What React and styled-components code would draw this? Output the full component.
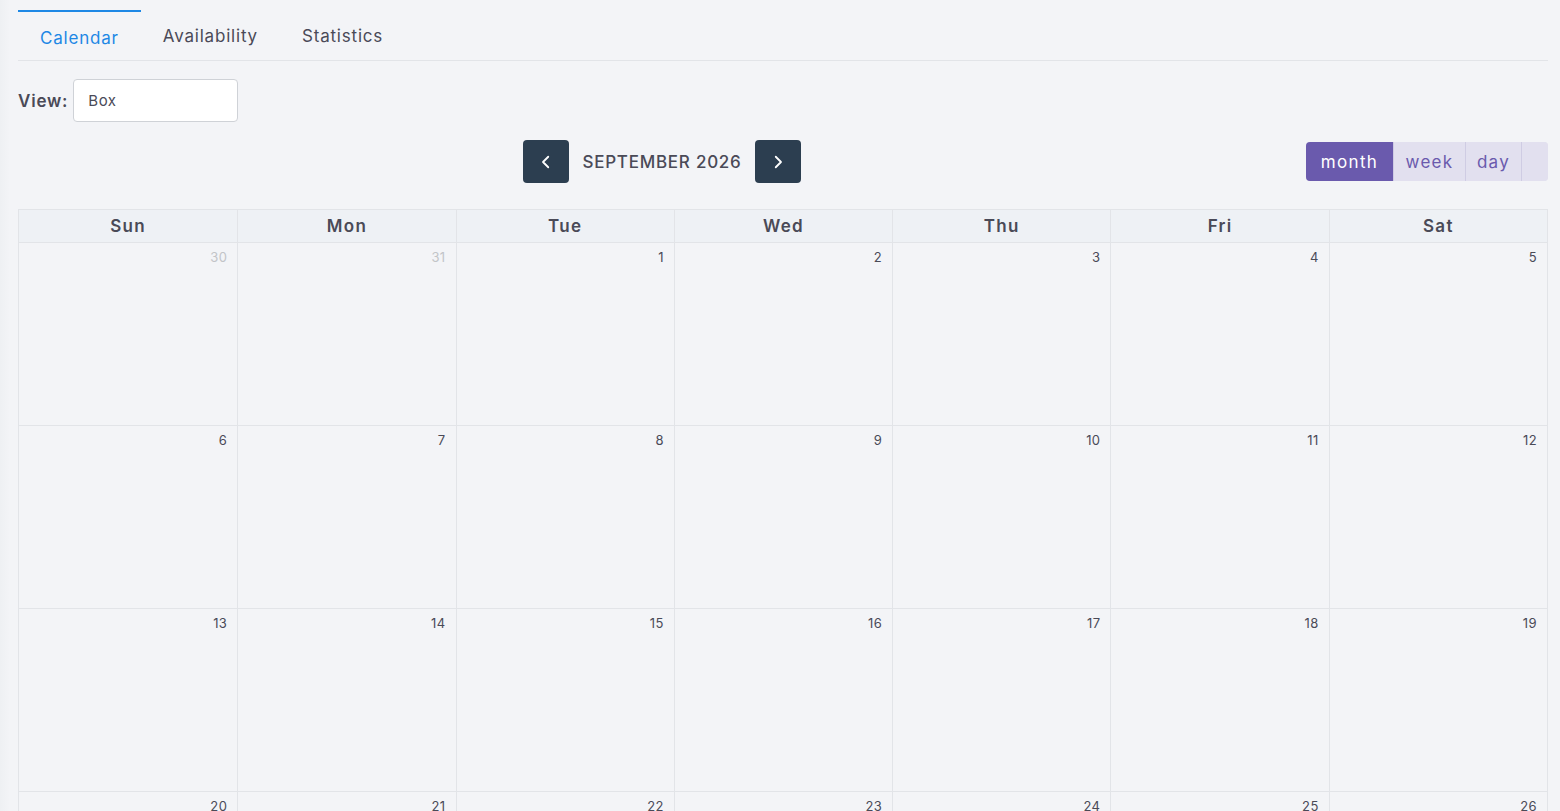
import React from 'react';
import styled, { createGlobalStyle } from 'styled-components';

const GlobalStyle = createGlobalStyle`
	html, body {
		margin: 0;
		padding: 0;
		background: #f3f4f7;
		font-family: Inter, "Noto Sans", sans-serif;
		color: #4a4a57;
	}
	* { box-sizing: border-box; }
`;

const Page = styled.div`
	padding: 10px 12px 0 18px;
	height: 811px;
	overflow: hidden;
	background: linear-gradient(to right, #eef0f3 0, #f3f4f7 10px);
`;

const Tabs = styled.div`
	display: flex;
	border-bottom: 1px solid #e2e4e8;
`;

const Tab = styled.div`
	height: 50px;
	padding: ${(p) => (p.$active ? '4px 22px 0' : '0 22px')};
	display: flex;
	align-items: center;
	font-size: 17px;
	letter-spacing: 0.8px;
	color: ${(p) => (p.$active ? '#1e88e5' : '#4a4a57')};
	border-top: 2px solid ${(p) => (p.$active ? '#1e88e5' : 'transparent')};
`;

const ViewRow = styled.div`
	display: flex;
	align-items: center;
	gap: 5px;
	margin-top: 18px;
`;

const Label = styled.label`
	font-size: 17px;
	font-weight: 600;
	letter-spacing: 0.8px;
	color: #4a4a57;
`;

const Input = styled.div`
	width: 165px;
	height: 43px;
	background: #fff;
	border: 1px solid #cfd2d7;
	border-radius: 4px;
	padding: 0 14px;
	display: flex;
	align-items: center;
	font-size: 15px;
	letter-spacing: 0.5px;
	color: #4a4a57;
`;

const Toolbar = styled.div`
	display: flex;
	justify-content: space-between;
	align-items: center;
	margin-top: 18px;
	height: 43px;
`;

const Center = styled.div`
	display: flex;
	align-items: center;
	gap: 13px;
`;

const NavButton = styled.button`
	width: 46px;
	height: 43px;
	border: none;
	border-radius: 4px;
	background: #2c3e50;
	color: #fff;
	display: flex;
	align-items: center;
	justify-content: center;
	padding: 0;
`;

const Title = styled.h2`
	margin: 0;
	font-size: 17px;
	font-weight: 500;
	color: #4a4a57;
	letter-spacing: 0.75px;
`;

const ButtonGroup = styled.div`
	display: flex;
	height: 39px;
	border-radius: 4px;
	overflow: hidden;
	background: #e2e0ef;
`;

const ViewButton = styled.button`
	border: none;
	border-left: ${(p) => (p.$first ? 'none' : '1px solid #cfcce3')};
	background: ${(p) => (p.$active ? '#6a5aad' : '#e2e0ef')};
	color: ${(p) => (p.$active ? '#fff' : '#6a5aad')};
	font-family: inherit;
	font-size: 17px;
	letter-spacing: 1.3px;
	padding: 0;
	width: ${(p) => p.$w}px;
`;

const Grid = styled.div`
	margin-top: 26px;
	border: 1px solid #e2e4e8;
	border-bottom: none;
`;

const Row = styled.div`
	display: grid;
	grid-template-columns: repeat(7, 1fr);
	border-top: ${(p) => (p.$first ? 'none' : '1px solid #e2e4e8')};
`;

const HeadCell = styled.div`
	height: 32px;
	background: #eef1f5;
	border-left: ${(p) => (p.$first ? 'none' : '1px solid #e2e4e8')};
	display: flex;
	align-items: center;
	justify-content: center;
	font-size: 17px;
	font-weight: 600;
	letter-spacing: 1.3px;
	color: #4a4a57;
`;

const DayCell = styled.div`
	height: 182px;
	border-left: ${(p) => (p.$first ? 'none' : '1px solid #e2e4e8')};
	padding: 6px 10px 0 0;
	text-align: right;
	font-size: 13px;
	letter-spacing: 0.4px;
	color: ${(p) => (p.$other ? '#c2c4c8' : '#4a4a57')};
`;

const Chevron = ({ dir }) => (
	<svg width="18" height="18" viewBox="0 0 24 24" fill="none" stroke="#fff" strokeWidth="2.4" strokeLinecap="round" strokeLinejoin="round">
		<path d={dir === 'left' ? 'M15 5l-7 7 7 7' : 'M9 5l7 7-7 7'} />
	</svg>
);

const days = ['Sun', 'Mon', 'Tue', 'Wed', 'Thu', 'Fri', 'Sat'];

const weeks = [
	[30, 31, 1, 2, 3, 4, 5],
	[6, 7, 8, 9, 10, 11, 12],
	[13, 14, 15, 16, 17, 18, 19],
	[20, 21, 22, 23, 24, 25, 26],
	[27, 28, 29, 30, 1, 2, 3],
];

export default function App() {
	return (
		<>
			<GlobalStyle />
			<Page>
				<Tabs>
					<Tab $active>Calendar</Tab>
					<Tab>Availability</Tab>
					<Tab>Statistics</Tab>
				</Tabs>
				<ViewRow>
					<Label>View:</Label>
					<Input>Box</Input>
				</ViewRow>
				<Toolbar>
					<div />
					<Center>
						<NavButton><Chevron dir="left" /></NavButton>
						<Title>SEPTEMBER 2026</Title>
						<NavButton><Chevron dir="right" /></NavButton>
					</Center>
					<ButtonGroup>
						<ViewButton $first $active $w={87}>month</ViewButton>
						<ViewButton $w={72}>week</ViewButton>
						<ViewButton $w={56}>day</ViewButton>
						<ViewButton $w={27} />
					</ButtonGroup>
				</Toolbar>
				<Grid>
					<Row $first>
						{days.map((d, i) => (
							<HeadCell key={d} $first={i === 0}>{d}</HeadCell>
						))}
					</Row>
					{weeks.map((w, wi) => (
						<Row key={wi}>
							{w.map((n, i) => (
								<DayCell
									key={i}
									$first={i === 0}
									$other={(wi === 0 && n > 20) || (wi === 4 && n < 10)}
								>
									{n}
								</DayCell>
							))}
						</Row>
					))}
				</Grid>
			</Page>
		</>
	);
}
